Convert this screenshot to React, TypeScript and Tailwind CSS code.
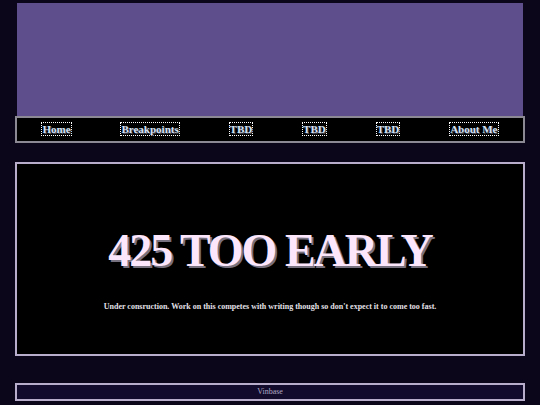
export default function App() {
  const links = ["Home", "Breakpoints", "TBD", "TBD", "TBD", "About Me"];
  return (
    <div
      className="min-h-[405px] bg-[#0b0619] px-[15px] pt-[3px] pb-[4px]"
      style={{ fontFamily: '"Liberation Serif", "Times New Roman", serif' }}
    >
      <header>
        <div className="mx-[2px] h-[113px] bg-[#5e4e8c]" />
        <nav className="flex h-[27px] items-center justify-around border-2 border-[#8c8894] bg-black pb-[1px]">
          {links.map((l, i) => (
            <a
              key={i}
              href="#"
              className="border border-dotted border-white text-[11px] font-bold leading-[12px] text-[#d4e2f4] [text-shadow:1px_1px_0_#4a4a5a]"
            >
              {l}
            </a>
          ))}
        </nav>
      </header>

      <main className="mt-[19px] flex h-[194px] flex-col items-center border-2 border-[#b8aecb] bg-black pt-[62px]">
        <h1 className="text-[46px] font-bold leading-[50px] tracking-[-2px] text-[#fbe6fb] [text-shadow:2px_2px_0_#77707f]">
          425 TOO EARLY
        </h1>
        <p className="mt-[25px] text-[8px] font-bold text-[#e4e0e8]">
          Under consruction. Work on this competes with writing though so don't expect it to come too fast.
        </p>
      </main>

      <footer className="mt-[27px] flex h-[18px] items-center justify-center border-2 border-[#b8aecb] bg-[#120b2b]">
        <span className="text-[8px] text-[#b0a9c6]">Vinbase</span>
      </footer>
    </div>
  );
}
